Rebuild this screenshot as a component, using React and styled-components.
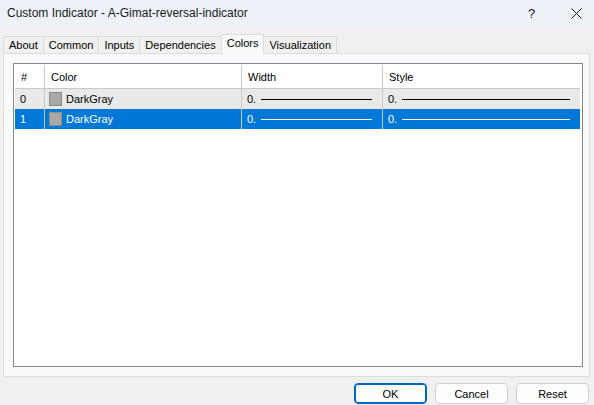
import React from 'react';
import styled, { createGlobalStyle } from 'styled-components';

const Global = createGlobalStyle`
  html, body {
    margin: 0;
    padding: 0;
    background: #f0f0f0;
    font-family: "Liberation Sans", Arial, sans-serif;
    font-size: 11px;
    color: #000;
  }
`

const Window = styled.div`
  width: 594px;
  height: 405px;
  display: flex;
  flex-direction: column;
  background: #f0f0f0;
  overflow: hidden;
`

const TitleBar = styled.div`
  height: 26px;
  flex: none;
  display: flex;
  align-items: center;
  background: #eef2f8;
  padding-left: 7px;
  font-size: 12px;
  color: #1a1a1a;
`

const Title = styled.div`
  flex: 1;
`

const TitleButton = styled.div`
  width: ${p => p.w || 45}px;
  height: 26px;
  margin-right: ${p => p.gap || 0}px;
  display: flex;
  align-items: center;
  justify-content: center;
  font-size: 13px;
`

const TabBar = styled.div`
  display: flex;
  align-items: flex-end;
  padding: 7px 0 0 4px;
  height: 20px;
  flex: none;
`

const Tab = styled.div`
  height: ${p => (p.active ? '20px' : '17px')};
  padding: 0 5px;
  display: flex;
  align-items: center;
  box-sizing: border-box;
  border: 1px solid #dcdcdc;
  border-bottom: none;
  margin-left: -1px;
  background: ${p => (p.active ? '#f9f9f9' : '#f0f0f0')};
  position: relative;
  z-index: ${p => (p.active ? 1 : 0)};
  padding-bottom: ${p => (p.active ? '3px' : '0')};
  margin-bottom: ${p => (p.active ? '-1px' : '0')};
`

const Panel = styled.div`
  height: 324px;
  margin: 0 4px 0 3px;
  box-sizing: border-box;
  border: 1px solid #dcdcdc;
  background: #f9f9f9;
  padding: 9px 6px 9px 9px;
  display: flex;
`

const Table = styled.div`
  flex: 1;
  border: 1px solid #828790;
  background: #fff;
  padding: 1px;
  display: flex;
  flex-direction: column;
`

const Row = styled.div`
  display: grid;
  grid-template-columns: 30px 197px 141px 1fr;
  height: ${p => (p.header ? '23px' : '20px')};
  background: ${p => (p.selected ? '#0078d7' : p.header ? '#fff' : '#e9e9e9')};
  color: ${p => (p.selected ? '#fff' : '#000')};
  border-bottom: ${p => (p.header ? '1px solid #c8c8c8' : 'none')};
  margin-right: 1px;
`

const Cell = styled.div`
  display: flex;
  align-items: center;
  padding-left: ${p => p.pad || 5}px;
  border-right: ${p => (p.last ? 'none' : '1px solid #c8c8c8')};
  overflow: hidden;
  white-space: nowrap;
`

const Swatch = styled.span`
  width: 11px;
  height: 12px;
  background: #a9a9a9;
  border: 1px solid #8c8c8c;
  margin: 0 4px 0 1px;
  flex: none;
`

const LineSample = styled.span`
  flex: 1;
  height: 1px;
  margin: 0 10px 0 5px;
  background: ${p => (p.light ? '#fff' : '#000')};
`

const Footer = styled.div`
  display: flex;
  justify-content: flex-end;
  gap: 8px;
  padding: 6px 5px 0 0;
`

const Button = styled.button`
  width: 73px;
  height: 21px;
  box-sizing: border-box;
  font-family: "Liberation Sans", Arial, sans-serif;
  font-size: 11px;
  color: #000;
  background: #fdfdfd;
  border: 1px solid ${p => (p.primary ? '#0067c0' : '#d0d0d0')};
  box-shadow: ${p => (p.primary ? 'inset 0 0 0 1px #0067c0' : 'none')};
  border-radius: 4px;
  padding: 0;
`

const tabs = ['About', 'Common', 'Inputs', 'Dependencies', 'Colors', 'Visualization']

const rows = [
  { id: 0, name: 'DarkGray' },
  { id: 1, name: 'DarkGray', selected: true },
]

export default function App() {
  return (
    <Window>
      <Global />
      <TitleBar>
        <Title>Custom Indicator - A-Gimat-reversal-indicator</Title>
        <TitleButton gap={4}>?</TitleButton>
        <TitleButton w={36}>
          <svg width="11" height="11" viewBox="0 0 11 11">
            <path d="M0.5 0.5 L10.5 10.5 M10.5 0.5 L0.5 10.5" stroke="#1a1a1a" strokeWidth="1" />
          </svg>
        </TitleButton>
      </TitleBar>
      <TabBar>
        {tabs.map(t => (
          <Tab key={t} active={t === 'Colors'}>{t}</Tab>
        ))}
      </TabBar>
      <Panel>
        <Table>
          <Row header>
            <Cell pad={6}>#</Cell>
            <Cell pad={6}>Color</Cell>
            <Cell pad={6}>Width</Cell>
            <Cell pad={6} last>Style</Cell>
          </Row>
          {rows.map(r => (
            <Row key={r.id} selected={r.selected}>
              <Cell>{r.id}</Cell>
              <Cell pad={3}><Swatch />{r.name}</Cell>
              <Cell>0.<LineSample light={r.selected} /></Cell>
              <Cell last>0.<LineSample light={r.selected} /></Cell>
            </Row>
          ))}
        </Table>
      </Panel>
      <Footer>
        <Button primary>OK</Button>
        <Button>Cancel</Button>
        <Button>Reset</Button>
      </Footer>
    </Window>
  );
}
